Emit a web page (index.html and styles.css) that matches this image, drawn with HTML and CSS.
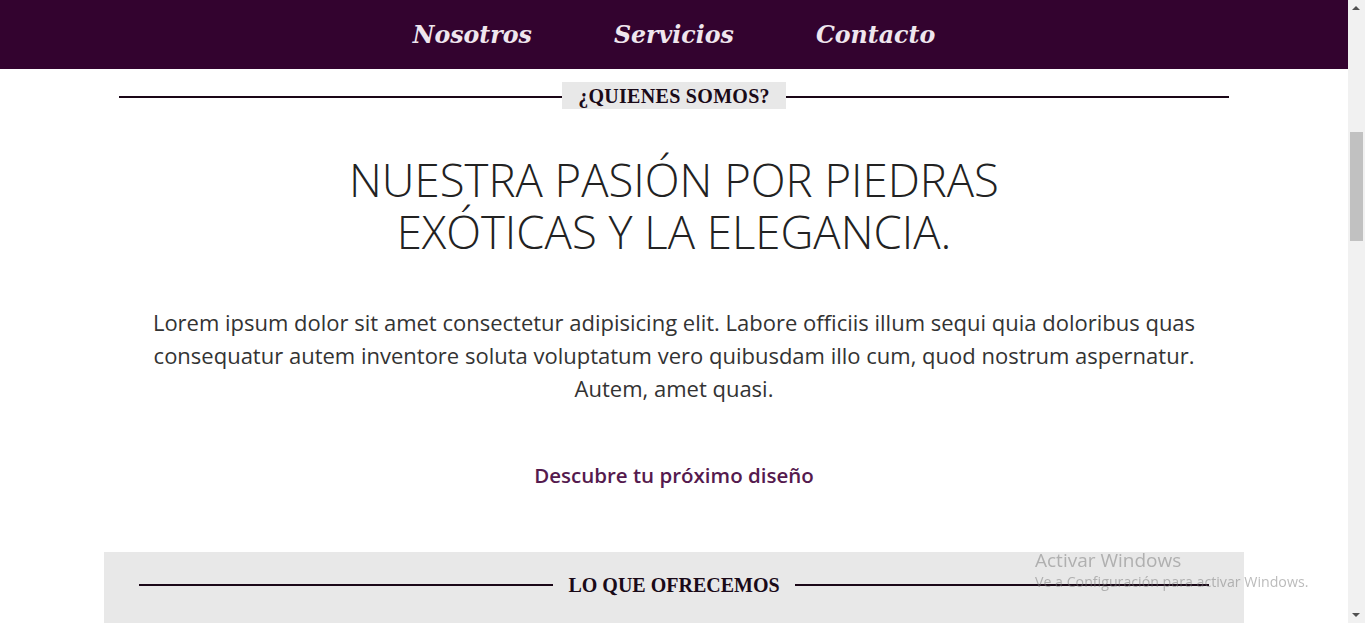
FILE: index.html
```html
<!DOCTYPE html>
<html lang="es">
<head>
<meta charset="utf-8">
<title>Nosotros</title>
<link rel="stylesheet" href="styles.css">
</head>
<body>
<header class="nav">
  <a href="#" class="nav-link">Nosotros</a>
  <a href="#" class="nav-link">Servicios</a>
  <a href="#" class="nav-link">Contacto</a>
</header>
<main>
  <section class="about container">
    <div class="divider">
      <span class="divider-line"></span>
      <h2 class="label label-boxed">¿QUIENES SOMOS?</h2>
      <span class="divider-line"></span>
    </div>
    <h1 class="headline">NUESTRA PASIÓN POR PIEDRAS<br>EXÓTICAS Y LA ELEGANCIA.</h1>
    <p class="intro">Lorem ipsum dolor sit amet consectetur adipisicing elit. Labore officiis illum sequi quia doloribus quas consequatur autem inventore soluta voluptatum vero quibusdam illo cum, quod nostrum aspernatur. Autem, amet quasi.</p>
    <a href="#" class="cta">Descubre tu próximo diseño</a>
  </section>
  <section class="offer">
    <div class="divider">
      <span class="divider-line"></span>
      <h2 class="label label-alt">LO QUE OFRECEMOS</h2>
      <span class="divider-line"></span>
    </div>
  </section>
</main>
<div class="scrollbar">
  <span class="sb-arrow sb-up"></span>
  <span class="sb-thumb"></span>
  <span class="sb-arrow sb-down"></span>
</div>
<div class="watermark">
  <div class="wm-title">Activar Windows</div>
  <div class="wm-sub">Ve a Configuración para activar Windows.</div>
</div>
</body>
</html>
```
FILE: styles.css
```css
* { box-sizing: border-box; }
html, body { margin: 0; padding: 0; }
body {
  font-family: "Open Sans", sans-serif;
  color: #212529;
  background: #fff;
  min-height: 900px;
  margin-right: 17px;
}
.nav {
  height: 69px;
  background: #33032f;
  display: flex;
  justify-content: center;
  align-items: center;
  gap: 82px;
}
.nav-link {
  font-family: "DejaVu Serif", serif;
  font-weight: bold;
  font-style: italic;
  font-size: 23.7px;
  color: #efe6ee;
  text-decoration: none;
  padding-top: 1px;
}
.container {
  width: 1140px;
  margin: 0 auto;
  padding: 0 15px;
}
.about {
  padding-top: 13px;
  text-align: center;
  padding-bottom: 63px;
}
.divider {
  display: flex;
  align-items: center;
}
.divider-line {
  flex: 1;
  height: 2px;
  background: #1a0717;
}
.label {
  margin: 0;
  font-family: "Liberation Serif", serif;
  font-weight: bold;
  font-size: 20px;
  color: #1a0a18;
}
.label-boxed {
  background: #e8e8e8;
  padding: 2px 16px 1px;
  line-height: 24px;
  letter-spacing: 0.3px;
}
.about .divider-line { margin-top: 2px; }
.label-alt {
  padding: 0 15px;
  line-height: 24px;
}
.headline {
  margin: 44px 0 0;
  font-weight: 350;
  font-size: 45.5px;
  line-height: 52px;
  color: #222;
}
.intro {
  margin: 49px auto 0;
  max-width: 1080px;
  font-size: 22px;
  line-height: 33px;
  color: #333;
}
.cta {
  display: inline-block;
  margin-top: 56px;
  font-weight: 600;
  font-size: 20.5px;
  color: #551a4e;
  text-decoration: none;
}
.offer {
  width: 1140px;
  margin: 0 auto;
  background: #e8e8e8;
  padding: 21px 35px 40px;
  min-height: 200px;
}
.scrollbar {
  position: fixed;
  top: 0;
  right: 0;
  width: 17px;
  height: 100vh;
  background: #f1f1f1;
}
.sb-thumb {
  position: absolute;
  left: 2px;
  top: 132px;
  width: 13px;
  height: 109px;
  background: #c1c1c1;
}
.sb-arrow {
  position: absolute;
  left: 4px;
  width: 0;
  height: 0;
  border-left: 4.5px solid transparent;
  border-right: 4.5px solid transparent;
}
.sb-up { top: 6px; border-bottom: 4px solid #505050; }
.sb-down { bottom: 6px; border-top: 4px solid #505050; }
.watermark {
  position: fixed;
  left: 1035px;
  top: 548px;
  color: rgba(120,120,120,0.5);
  font-family: "Open Sans", sans-serif;
  pointer-events: none;
}
.wm-title { font-size: 19px; line-height: 24px; }
.wm-sub { font-size: 14.2px; line-height: 20px; }
```
